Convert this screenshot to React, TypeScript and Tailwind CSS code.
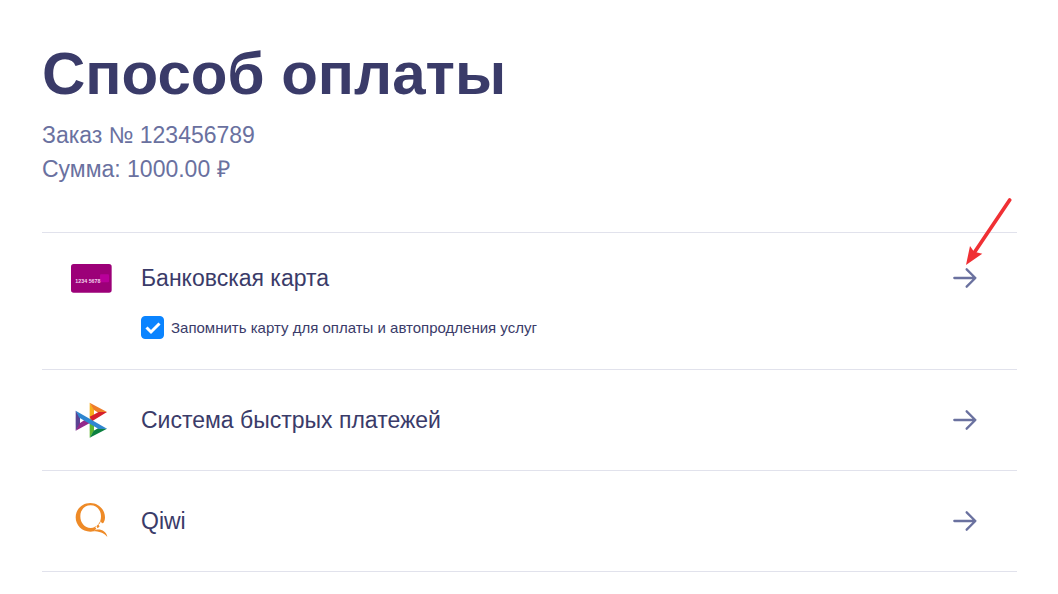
import React, { useState } from 'react';

interface PaymentRowProps {
  title: string;
  icon: React.ReactNode;
  pointer?: boolean;
}

function CardIcon() {
  return (
    <svg viewBox="30 6 126 126" className="h-[42px] w-[42px]" aria-hidden="true">
      <rect x="33" y="27" width="122" height="86" rx="8" fill="#9c0078" />
      <rect x="120" y="58" width="27" height="24" rx="3" fill="#b8009a" />
      <text x="46" y="85" fill="#f3d3ec" fontSize="16" fontWeight="700" fontFamily="Liberation Sans, sans-serif">
        1234 5678
      </text>
    </svg>
  );
}

function FastPaymentIcon() {
  return (
    <svg viewBox="15 9 126 126" className="h-[42px] w-[42px]" aria-hidden="true">
      <path d="M32 44L45 62V86L32 104Z" fill="#5b4392" />
      <path d="M32 104L44 82L62 70L80 78Z" fill="#93288a" />
      <path d="M74 20L87 40V62L74 75Z" fill="#f6b01a" />
      <path d="M74 20L126 48L101 51L86 41Z" fill="#ee7d2a" />
      <path d="M126 48L81 76L74 62L101 48Z" fill="#d6202c" />
      <path d="M74 68L87 80V104L74 125Z" fill="#5cb531" />
      <path d="M74 125L126 98L102 95L86 104Z" fill="#0c8040" />
      <path d="M32 44L126 98L101 99L43 65Z" fill="#2f86d0" />
    </svg>
  );
}

function QiwiIcon() {
  return (
    <svg viewBox="15 13 126 126" className="h-[42px] w-[42px]" aria-hidden="true">
      <path
        fillRule="evenodd"
        fill="#ee8a27"
        d="M76 22C100 22 120 41 120 65C120 72 118 78 115 82L111 83L107 77L105 83L100 87L104 92L99 96L94 91L89 92L94 99L87 106C84 107 80 108 76 108C51 108 32 89 32 65C32 41 51 22 76 22ZM77 29C58 29 46 43 46 62C46 82 59 97 77 97C95 97 108 82 108 62C108 43 95 29 77 29Z"
      />
      <path fill="#ee8a27" d="M84 107C98 96 124 103 127 124C117 111 102 107 84 107Z" />
      <circle cx="98" cy="95" r="2" fill="#ee8a27" />
    </svg>
  );
}

function ArrowIcon() {
  return (
    <svg viewBox="39 22 72 72" className="h-6 w-6" fill="none" stroke="#6a719f" strokeWidth="7" strokeLinecap="round" strokeLinejoin="round" aria-hidden="true">
      <path d="M43 58H106M80 32L106 58L80 84" />
    </svg>
  );
}

function PointerArrow() {
  return (
    <svg viewBox="69 21 162 216" className="pointer-events-none absolute bottom-[21px] left-[10px] h-[72px] w-[54px]" aria-hidden="true">
      <path d="M209 30L100 192" stroke="#f03034" strokeWidth="11" strokeLinecap="round" />
      <path d="M78 225L90 168L102 185L127 191Z" fill="#f03034" />
    </svg>
  );
}

function PaymentRow({ title, icon, pointer }: PaymentRowProps) {
  return (
    <button type="button" className="flex h-[34px] w-full items-center gap-7 pr-10 pl-7 text-left text-[23px] leading-[34px] text-[#3a3b69]">
      <span className="w-[43px] shrink-0">{icon}</span>
      <span className="flex-1">{title}</span>
      <span className="relative shrink-0">
        <ArrowIcon />
        {pointer && <PointerArrow />}
      </span>
    </button>
  );
}

export default function App() {
  const [remember, setRemember] = useState(true);

  return (
    <main className="min-h-screen bg-white pt-10 pr-[41px] pl-[42px] font-['Liberation_Sans',Arial,sans-serif]">
      <h1 className="text-[60px] leading-[68px] font-bold text-[#3a3b69]">Способ оплаты</h1>
      <div className="mt-[10px] text-[23px] leading-[34px] text-[#6a719f]">
        <p>Заказ № 123456789</p>
        <p>Сумма: 1000.00 ₽</p>
      </div>

      {/* Payment methods */}
      <ul className="mt-[46px] divide-y divide-[#e1e2ec] border-y border-[#e1e2ec]">
        <li className="pt-7 pb-[30px]">
          <PaymentRow title="Банковская карта" icon={<CardIcon />} pointer />
          <div className="mt-[21px] flex items-center gap-[7px] pl-[99px]">
            <span className="grid h-[23px] w-[23px] shrink-0">
              <input
                id="remember"
                type="checkbox"
                checked={remember}
                onChange={(e) => setRemember(e.target.checked)}
                className="peer col-start-1 row-start-1 h-[23px] w-[23px] appearance-none rounded border border-[#0a84ff] checked:bg-[#0a84ff]"
              />
              <svg viewBox="0 0 23 23" className="pointer-events-none invisible col-start-1 row-start-1 peer-checked:visible" fill="none" stroke="#fff" strokeWidth="3" aria-hidden="true">
                <path d="M5.500 11.500L10 16L18.500 7.500" />
              </svg>
            </span>
            <label htmlFor="remember" className="text-[15px] leading-5 text-[#3a3b69]">
              Запомнить карту для оплаты и автопродления услуг
            </label>
          </div>
        </li>
        <li className="py-[33px]">
          <PaymentRow title="Система быстрых платежей" icon={<FastPaymentIcon />} />
        </li>
        <li className="py-[33px]">
          <PaymentRow title="Qiwi" icon={<QiwiIcon />} />
        </li>
      </ul>
    </main>
  );
}
